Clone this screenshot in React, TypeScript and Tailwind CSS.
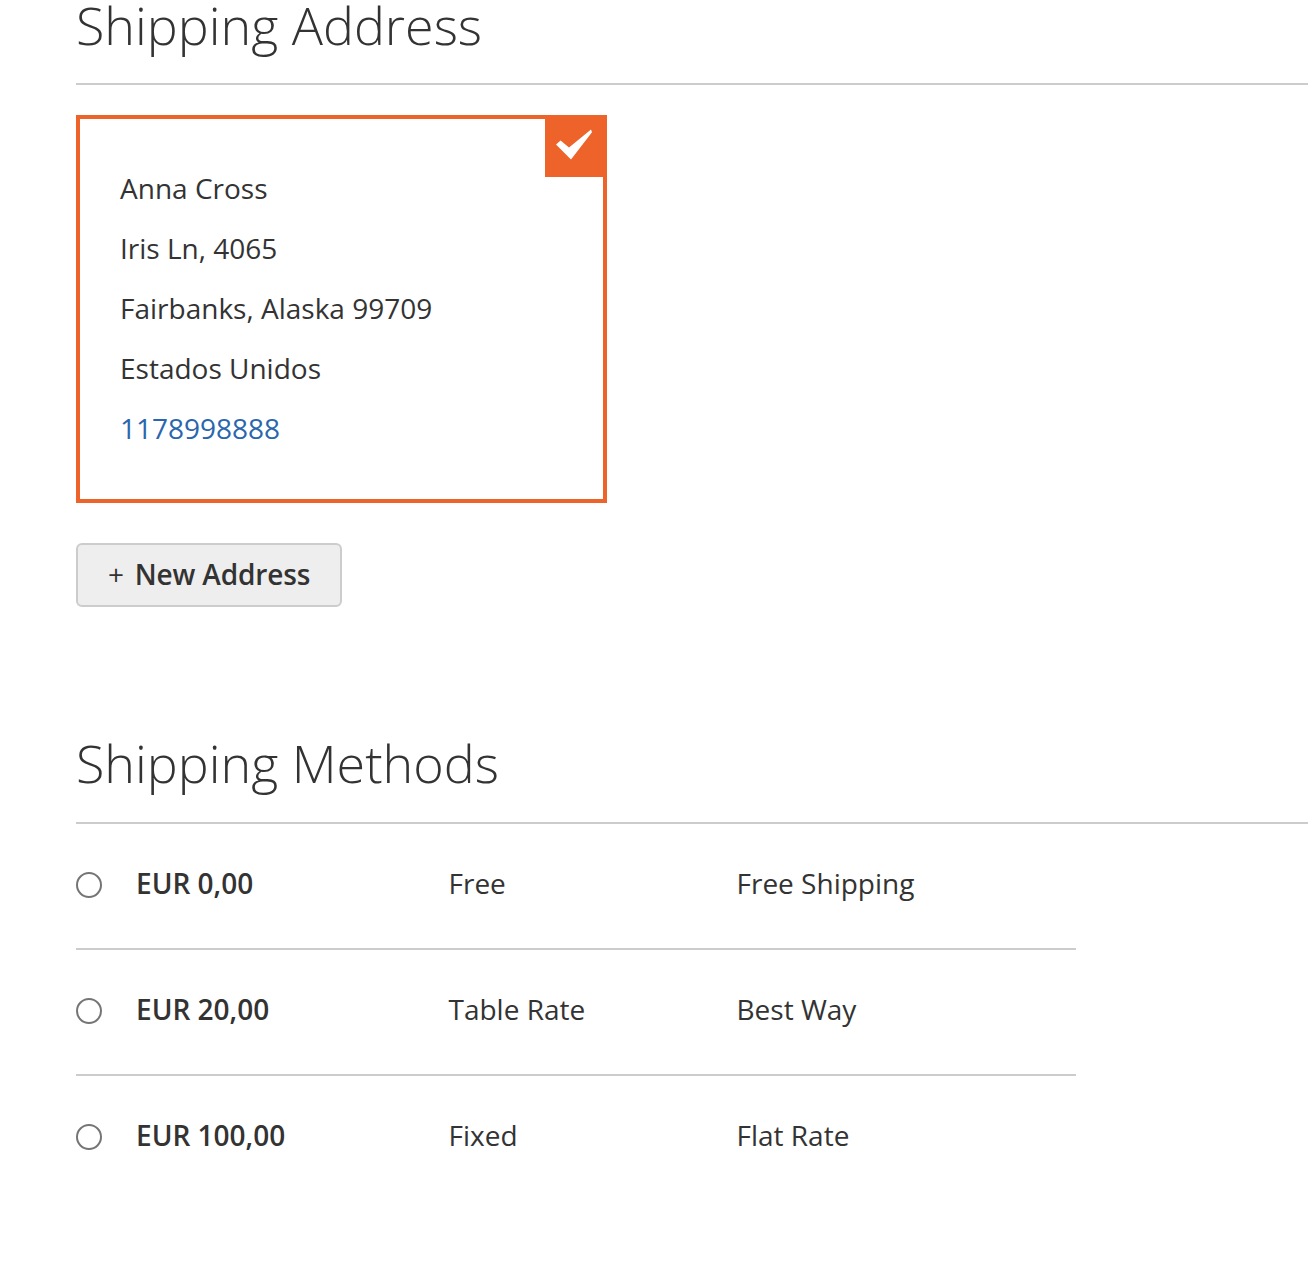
const methods = [
  { price: "EUR 0,00", method: "Free", carrier: "Free Shipping" },
  { price: "EUR 20,00", method: "Table Rate", carrier: "Best Way" },
  { price: "EUR 100,00", method: "Fixed", carrier: "Flat Rate" },
];

const address = ["Anna Cross", "Iris Ln, 4065", "Fairbanks, Alaska 99709", "Estados Unidos"];

export default function App() {
  return (
    <div className="h-[1276px] overflow-hidden bg-white pl-[76px] font-['Open_Sans',sans-serif] text-[#333333]">
      <h2 className="h-[85px] border-b-2 border-[#cccccc] text-[52px] leading-[50px] font-light">
        Shipping Address
      </h2>

      <div className="relative mt-[30px] h-[388px] w-[531px] border-4 border-[#ed632a] pt-[39px] pl-[40px] text-[28px] leading-[60px]">
        <div className="absolute -top-1 -right-1 flex h-[62px] w-[62px] items-center justify-center bg-[#ed632a]">
          <svg className="mr-[4px] mb-[3px]" width="38" height="32" viewBox="0 0 38 32" fill="none">
            <path d="M1 15.5 L5.6 11.5 L14 18.5 L36 0.5 L37 3.2 L16 30.5 Z" fill="#ffffff" />
          </svg>
        </div>
        {address.map((line) => (
          <div key={line}>{line}</div>
        ))}
        <div className="text-[#2a66ad]">1178998888</div>
      </div>

      <button className="mt-[40px] flex h-[64px] w-[266px] items-center justify-center rounded-[6px] border-2 border-[#cccccc] bg-[#eeeeee] pb-[2px] text-[28px] font-semibold tracking-[-0.15px]">
        <span className="mr-[11px] font-medium">+</span>
        New Address
      </button>

      <h2 className="mt-[128px] h-[89px] border-b-2 border-[#cccccc] text-[52px] leading-[55px] font-light">
        Shipping Methods
      </h2>

      <div className="w-[1000px]">
        {methods.map((row, i) => (
          <div
            key={row.price}
            className={`flex h-[126px] items-center border-b-2 pb-[2px] text-[28px] ${i < 2 ? "border-[#cccccc]" : "border-transparent"}`}
          >
            <span className="h-[26px] w-[26px] rounded-full border-2 border-[#757575] bg-white" />
            <span className="mb-[4px] ml-[34px] w-[312.5px] font-semibold">{row.price}</span>
            <span className="mb-[4px] w-[288px]">{row.method}</span>
            <span className="mb-[4px]">{row.carrier}</span>
          </div>
        ))}
      </div>
    </div>
  );
}
